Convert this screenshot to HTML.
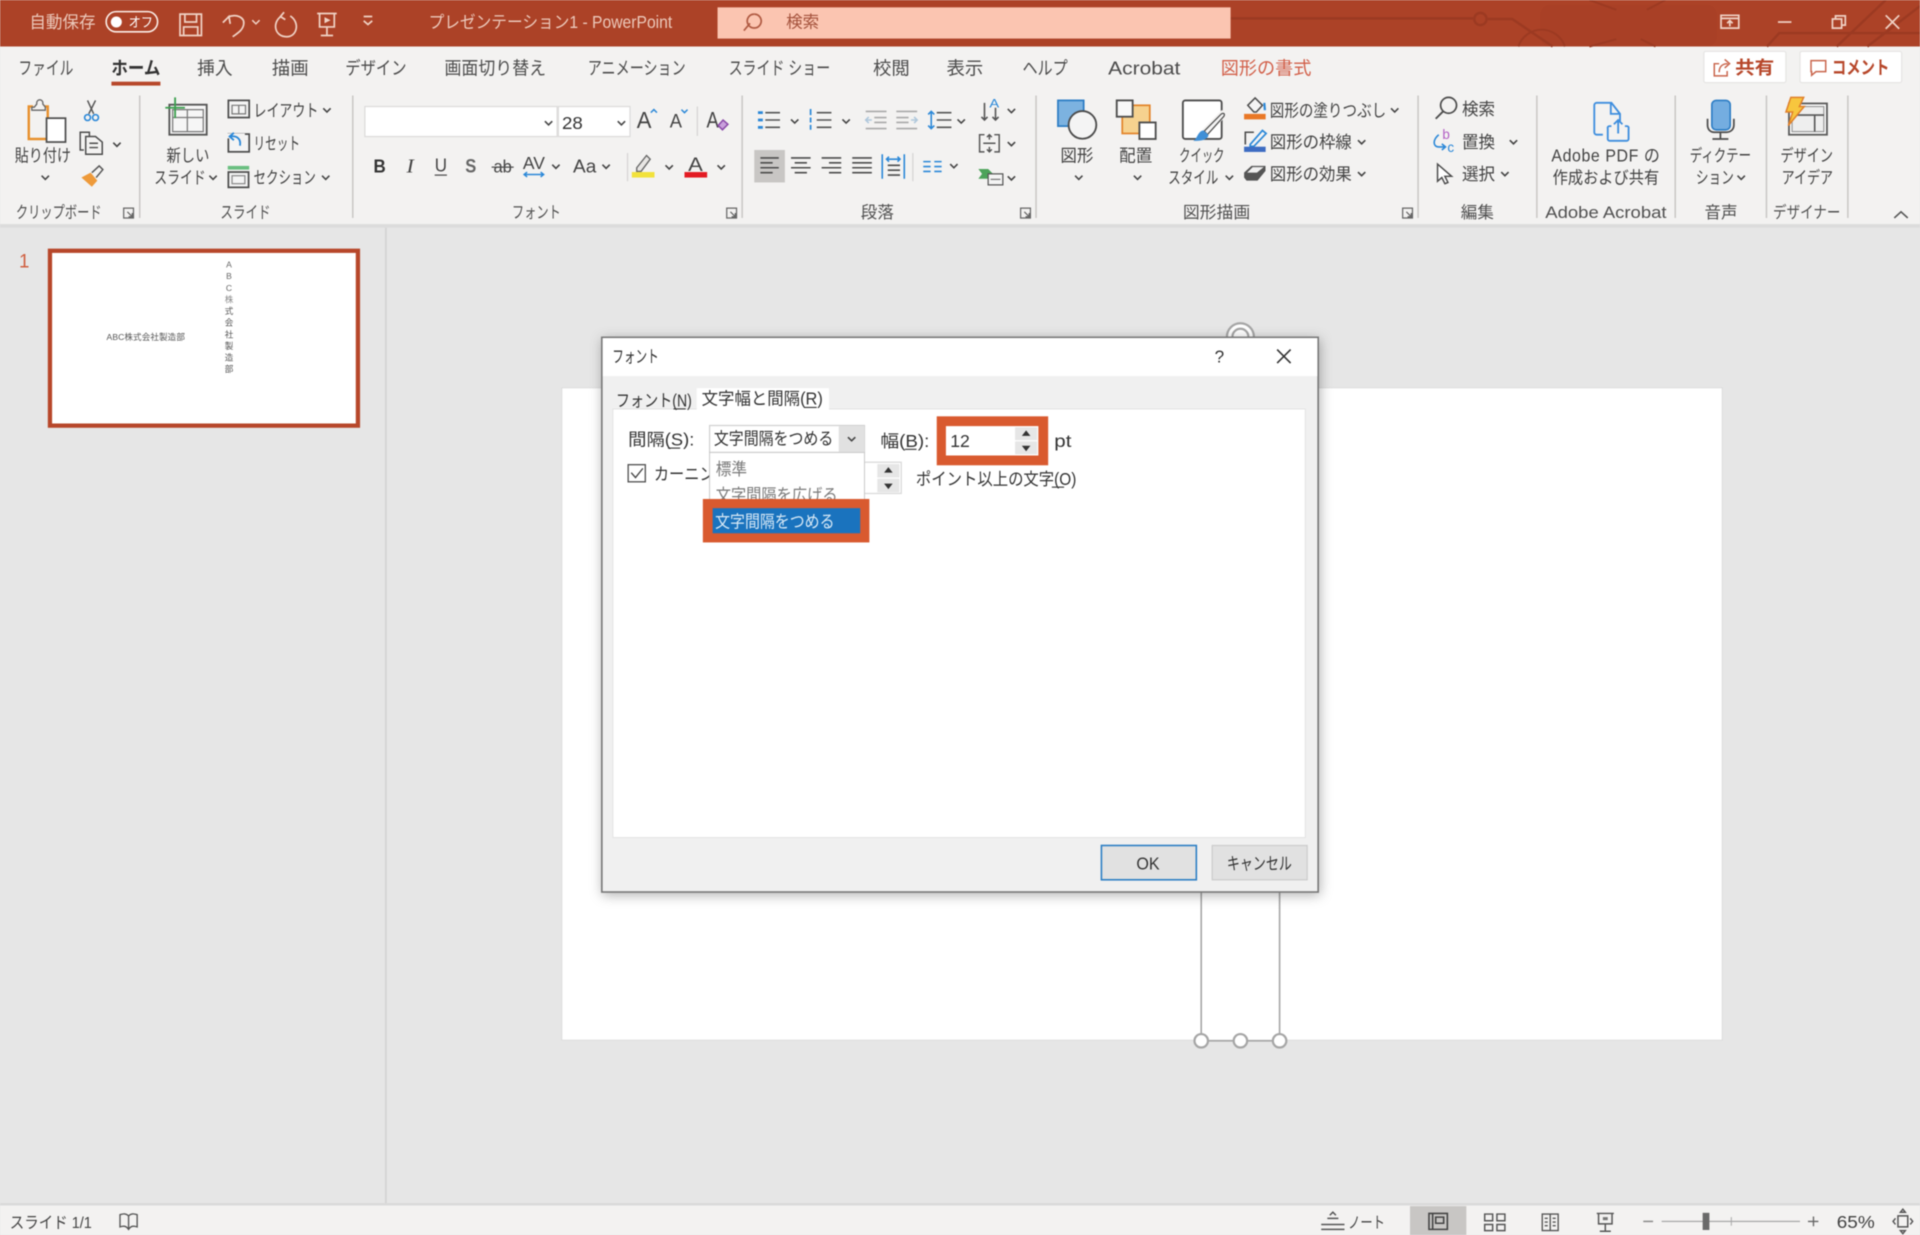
<!DOCTYPE html>
<html lang="ja"><head><meta charset="utf-8"><title>PowerPoint</title>
<style>
html,body{margin:0;padding:0;width:1920px;height:1235px;overflow:hidden;background:#e6e6e6}
svg{display:block;width:1920px;height:1235px;filter:blur(.55px)}
text{font-family:"Liberation Sans","Noto Sans CJK JP",sans-serif;fill:#434343;font-size:14px}
.tb{fill:#ecc9bb;font-size:14px}
.tab{font-size:15px;fill:#4c4c4c}
.g{font-size:13.5px;fill:#505050}
.d{fill:#333;font-size:14px}
.w{fill:none;stroke:#f0d2c5;stroke-width:1.4}
</style></head><body>
<svg viewBox="0 0 1568 1008.6" preserveAspectRatio="none" xmlns="http://www.w3.org/2000/svg">
<defs>
<path id="c" d="M-3-1.5L0 1.5L3-1.5" fill="none" stroke="#444" stroke-width="1.3"/>
<path id="lau" d="M-4-4H4V4H-4ZM-1-1L3 3M3 0V3H0" fill="none" stroke="#666" stroke-width="1"/>
<filter id="sh" x="-5%" y="-5%" width="110%" height="110%"><feDropShadow dx="1" dy="2" stdDeviation="5" flood-color="#000" flood-opacity=".3"/></filter>
</defs>

<!-- background -->
<rect width="1568" height="1009" fill="#e6e6e6"/>
<rect x="0" y="0" width="1568" height="38" fill="#ac4227"/>
<rect x="1258" y="4" width="144" height="34" rx="8" fill="#a94026"/>
<rect x="0" y="38" width="1568" height="146" fill="#f3f2f1"/>
<rect x="0" y="183" width="1568" height="3" fill="#dcdcdc"/>
<rect x="314.500" y="186" width="1.300" height="798" fill="#d2d2d2"/>
<rect x="0" y="984" width="1568" height="25" fill="#f3f2f1"/>
<rect x="0" y="982.500" width="1568" height="2" fill="#dadada"/>

<!-- title bar circuit pattern -->
<g fill="none" stroke="#9c3a22" stroke-width="2">
<path d="M1005 15H1203M1215 15.500H1235L1268 38"/><circle cx="1209" cy="15.500" r="5"/>
<path d="M1443 38L1453 27H1568M1500 38L1540 0M1525 38L1568 5"/>
<path d="M1240 38A20 20 0 0 1 1278 38M1298 0L1320 8M1345 8L1360 0M1298 38L1320 32M1340 32L1352 38" stroke-width="1.600"/>
</g>

<text class="tb" x="24" y="23" textLength="54" lengthAdjust="spacingAndGlyphs">自動保存</text>
<rect x="86.700" y="9.500" width="42" height="16.500" rx="8.250" fill="none" stroke="#fbeee8" stroke-width="1.300"/>
<circle cx="95" cy="18" r="4.500" fill="#fff"/>
<text x="105" y="22" textLength="20" lengthAdjust="spacingAndGlyphs" style="font-size:11px;fill:#fff">オフ</text>
<path class="w" d="M147 11.500H164.500V29H147ZM151 11.500V18H160.500V11.500M150 29V22H161.500V29"/>
<path class="w" d="M182 18.500L187 13.500L188 19.500M186 14C193 11 200 14 199 20C198 25 194 27 190 30" stroke-width="1.500"/>
<path d="M206 16.500L209 19.500L212 16.500" fill="none" stroke="#f0d2c5" stroke-width="1.200"/>
<path class="w" d="M230 13C222 18 224 30 234 30C243 30 245 18 237 13M232 10L229 13.500L233 16"/>
<path class="w" d="M259 11H275M261 11V22H273V11M267 22V29M262 29H272"/><path d="M265 14L270 16.500L265 19Z" fill="#f0d2c5"/>
<path class="w" d="M297 13.500H304M297 17L300.500 20L304 17"/>
<text class="tb" x="350" y="23" textLength="199" lengthAdjust="spacingAndGlyphs">プレゼンテーション1 - PowerPoint</text>

<rect x="586" y="6" width="419" height="25.500" fill="#fbc5b1"/>
<path d="M616 11.500a5.700 5.700 0 1 1-.1 0M612.500 19L607.500 25" fill="none" stroke="#b05a42" stroke-width="1.400"/>
<text x="642" y="22.500" textLength="27" lengthAdjust="spacingAndGlyphs" style="fill:#a4523c;font-size:13.500px">検索</text>

<!-- window controls -->
<path class="w" d="M1405.500 12.500H1420V23H1405.500ZM1405.500 15H1420M1412.700 21.500V17M1410.500 19L1412.700 16.800L1415 19"/>
<path class="w" d="M1452 18H1463"/>
<path class="w" d="M1496.500 15.500H1504V23H1496.500ZM1499 15.500V13H1507V20.500H1504"/>
<path class="w" d="M1540 12.500L1551 23.500M1551 12.500L1540 23.500" stroke-width="1.500"/>

<!-- tabs -->
<text class="tab" x="15" y="61" textLength="45" lengthAdjust="spacingAndGlyphs">ファイル</text>
<text class="tab" x="91" y="61" textLength="40" lengthAdjust="spacingAndGlyphs" style="font-weight:700;fill:#333">ホーム</text>
<rect x="91" y="66.700" width="40" height="3.200" fill="#b7472a"/>
<text class="tab" x="161" y="61" textLength="29" lengthAdjust="spacingAndGlyphs">挿入</text>
<text class="tab" x="222" y="61" textLength="30" lengthAdjust="spacingAndGlyphs">描画</text>
<text class="tab" x="282" y="61" textLength="50" lengthAdjust="spacingAndGlyphs">デザイン</text>
<text class="tab" x="363" y="61" textLength="83" lengthAdjust="spacingAndGlyphs">画面切り替え</text>
<text class="tab" x="480" y="61" textLength="80" lengthAdjust="spacingAndGlyphs">アニメーション</text>
<text class="tab" x="595" y="61" textLength="83" lengthAdjust="spacingAndGlyphs">スライド ショー</text>
<text class="tab" x="713" y="61" textLength="30" lengthAdjust="spacingAndGlyphs">校閲</text>
<text class="tab" x="773" y="61" textLength="30" lengthAdjust="spacingAndGlyphs">表示</text>
<text class="tab" x="835" y="61" textLength="37" lengthAdjust="spacingAndGlyphs">ヘルプ</text>
<text class="tab" x="905" y="61" textLength="59" lengthAdjust="spacingAndGlyphs">Acrobat</text>
<text class="tab" x="997" y="61" textLength="74" lengthAdjust="spacingAndGlyphs" style="fill:#d2604a">図形の書式</text>

<!-- share/comment -->
<rect x="1391.500" y="42" width="67" height="25.500" rx="1.500" fill="#fff" stroke="#e6e5e4"/>
<path d="M1404 52H1400V62H1410.500V58M1404 59C1404 54 1407 52 1411 52M1408.500 48.500L1412.500 52L1408.500 55.500" fill="none" stroke="#c9654c" stroke-width="1.200"/>
<text x="1417" y="60.500" textLength="32" lengthAdjust="spacingAndGlyphs" style="font-weight:700;fill:#b7472a;font-size:15px">共有</text>
<rect x="1470" y="42" width="83" height="25.500" rx="1.500" fill="#fff" stroke="#e6e5e4"/>
<path d="M1479 49.500H1491V58.500H1483L1479.500 61.500V58.500H1479Z" fill="none" stroke="#c9654c" stroke-width="1.200"/>
<text x="1496" y="60.500" textLength="47" lengthAdjust="spacingAndGlyphs" style="font-weight:700;fill:#b7472a;font-size:15px">コメント</text>

<!-- separators -->
<g fill="#c8c6c4">
<rect x="113.500" y="78" width="1.200" height="100"/><rect x="287.500" y="78" width="1.200" height="100"/>
<rect x="605.500" y="78" width="1.200" height="100"/><rect x="845.500" y="78" width="1.200" height="100"/>
<rect x="1157.500" y="78" width="1.200" height="100"/><rect x="1254.500" y="78" width="1.200" height="100"/>
<rect x="1367.500" y="78" width="1.200" height="100"/><rect x="1442" y="78" width="1.200" height="100"/>
<rect x="1508.500" y="78" width="1.200" height="100"/>
</g>

<!-- group labels -->
<text class="g" x="13" y="178" textLength="70" lengthAdjust="spacingAndGlyphs">クリップボード</text>
<text class="g" x="180" y="178" textLength="41" lengthAdjust="spacingAndGlyphs">スライド</text>
<text class="g" x="418" y="178" textLength="40" lengthAdjust="spacingAndGlyphs">フォント</text>
<text class="g" x="703" y="178" textLength="27" lengthAdjust="spacingAndGlyphs">段落</text>
<text class="g" x="966" y="178" textLength="55" lengthAdjust="spacingAndGlyphs">図形描画</text>
<text class="g" x="1193" y="178" textLength="27" lengthAdjust="spacingAndGlyphs">編集</text>
<text class="g" x="1262" y="178" textLength="99" lengthAdjust="spacingAndGlyphs">Adobe Acrobat</text>
<text class="g" x="1392" y="178" textLength="27" lengthAdjust="spacingAndGlyphs">音声</text>
<text class="g" x="1448" y="178" textLength="55" lengthAdjust="spacingAndGlyphs">デザイナー</text>
<use href="#lau" x="105" y="174"/><use href="#lau" x="597.500" y="174"/><use href="#lau" x="837.500" y="174"/><use href="#lau" x="1149.500" y="174"/>
<path d="M1547 178L1552.500 173L1558 178" fill="none" stroke="#555" stroke-width="1.300"/>

<!-- clipboard -->
<path d="M27 87H23.500V113.500H38M35 87H39V96" fill="none" stroke="#e8912e" stroke-width="2"/>
<path d="M26 90V87.500H28L30 85V84A2.500 2.500 0 0 1 35 84V85L37 87.500V90Z" fill="#f3f2f1" stroke="#666" stroke-width="1.100"/>
<rect x="38" y="96.500" width="15.500" height="19.500" fill="#fff" stroke="#4c4c4c" stroke-width="1.400"/>
<text x="12" y="132" textLength="46" lengthAdjust="spacingAndGlyphs">貼り付け</text>
<use href="#c" x="37" y="145"/>
<path d="M71.500 82L76.500 93M78 82L72.500 93" fill="none" stroke="#555" stroke-width="1.200"/>
<circle cx="71.500" cy="96" r="2.400" fill="none" stroke="#2b88d8" stroke-width="1.300"/><circle cx="78" cy="96" r="2.400" fill="none" stroke="#2b88d8" stroke-width="1.300"/>
<path d="M68.500 122.500H65.500V108H73V111M70 111.500H78L83.500 116V126H70ZM73 117H80M73 120.500H80" fill="none" stroke="#4c4c4c" stroke-width="1.200"/>
<use href="#c" x="95.500" y="118"/>
<path d="M66.500 145L74 141L79.500 147.500L75 152.500Z" fill="#ee9a3a"/><path d="M75 141L81 135.500L84 138.500L78.500 145" fill="#f3f2f1" stroke="#555" stroke-width="1.200"/>

<!-- slides group -->
<rect x="138.300" y="85.500" width="30.500" height="24.500" fill="#f6f6f6" stroke="#555" stroke-width="1.500"/>
<path d="M141 89.500H166V107.500H141ZM153 89.500V107.500M141 96H166" fill="none" stroke="#777" stroke-width="1"/>
<path d="M143 79.500V96.500M135 88H151" stroke="#3ca04f" stroke-width="1.500" fill="none"/>
<text x="136" y="132" textLength="35" lengthAdjust="spacingAndGlyphs">新しい</text>
<text x="126" y="150" textLength="42" lengthAdjust="spacingAndGlyphs">スライド</text><use href="#c" x="174" y="145"/>
<rect x="186.500" y="82" width="17" height="14" fill="#f4f4f4" stroke="#4c4c4c" stroke-width="1.400"/>
<path d="M189.500 86H200.500V93H189.500ZM195 86V93" fill="none" stroke="#777"/>
<text x="207" y="95" textLength="53" lengthAdjust="spacingAndGlyphs">レイアウト</text><use href="#c" x="267" y="90"/>
<rect x="186.500" y="109.500" width="17" height="14.500" fill="#f4f4f4" stroke="#4c4c4c" stroke-width="1.400"/>
<path d="M185 111H198V117" fill="none" stroke="#f3f2f1" stroke-width="4"/><path d="M196 119C197 113 193 110.500 188 111.500M191 108.500L187.500 111.500L191 114.500" fill="none" stroke="#2b88d8" stroke-width="1.500"/>
<text x="207" y="122" textLength="38" lengthAdjust="spacingAndGlyphs">リセット</text>
<rect x="186" y="135.500" width="17.500" height="3" fill="#6abf80"/>
<rect x="186.500" y="140.500" width="16.500" height="12.500" fill="#f4f4f4" stroke="#4c4c4c" stroke-width="1.400"/>
<rect x="189.500" y="143.500" width="10.500" height="6.500" fill="none" stroke="#888"/>
<text x="207" y="150" textLength="51" lengthAdjust="spacingAndGlyphs">セクション</text><use href="#c" x="266" y="145"/>

<!-- font group -->
<rect x="298" y="87" width="157" height="24.500" fill="#fff" stroke="#dcdbda"/>
<rect x="456" y="87" width="58.500" height="24.500" fill="#fff" stroke="#dcdbda"/>
<use href="#c" x="448" y="100.500"/><use href="#c" x="507.500" y="100.500"/>
<text x="459" y="105.500" textLength="17" lengthAdjust="spacingAndGlyphs" style="font-size:14px;fill:#333">28</text>
<text x="520" y="104.500" style="font-size:19px" textLength="12" lengthAdjust="spacingAndGlyphs">A</text>
<path d="M531.500 92L534 89.500L536.500 92" fill="none" stroke="#2b88d8" stroke-width="1.200"/>
<text x="547" y="104" style="font-size:16px" textLength="10" lengthAdjust="spacingAndGlyphs">A</text>
<path d="M556.500 89.500L559 92L561.500 89.500" fill="none" stroke="#2b88d8" stroke-width="1.200"/>
<rect x="569" y="87" width="1" height="24" fill="#d5d4d3"/>
<text x="577" y="104" style="font-size:18px" textLength="10" lengthAdjust="spacingAndGlyphs">A</text>
<path d="M586.500 102.500L590.500 98L594.500 101.500L590 106Z" fill="#c9a0dc" stroke="#8a48a8" stroke-width="1.200"/>

<text x="305" y="141" textLength="10" lengthAdjust="spacingAndGlyphs" style="font-weight:700;fill:#333;font-size:15px">B</text>
<text x="332" y="141" textLength="6" lengthAdjust="spacingAndGlyphs" style="font-family:'Liberation Serif',serif;font-style:italic;font-size:16px">I</text>
<text x="355" y="140" textLength="10" lengthAdjust="spacingAndGlyphs" style="font-size:15px">U</text><rect x="355" y="142.500" width="10" height="1" fill="#4a4a4a"/>
<text x="380" y="141" textLength="9" lengthAdjust="spacingAndGlyphs" style="font-size:16px;fill:#666;font-weight:700">S</text>
<text x="403" y="141" textLength="15" lengthAdjust="spacingAndGlyphs" style="font-size:14px">ab</text><rect x="401.500" y="136" width="18" height="1" fill="#4a4a4a"/>
<text x="427" y="138" textLength="18" lengthAdjust="spacingAndGlyphs" style="font-size:14px">AV</text>
<path d="M428 142.500H444M430.500 140.500L428 142.500L430.500 144.500M441.500 140.500L444 142.500L441.500 144.500" fill="none" stroke="#2b88d8" stroke-width="1.200"/>
<use href="#c" x="454" y="136"/>
<text x="468" y="141" textLength="19" lengthAdjust="spacingAndGlyphs" style="font-size:15px">Aa</text>
<use href="#c" x="495" y="136"/>
<rect x="512" y="125" width="1" height="23" fill="#d5d4d3"/>
<path d="M520 137L528 127L531 130L523.500 140H520Z" fill="#e8e6e4" stroke="#666" stroke-width="1.100"/>
<rect x="516" y="140.500" width="18.500" height="4.500" fill="#f2e23b"/>
<use href="#c" x="546.500" y="136.500"/>
<text x="562" y="139.500" textLength="12" lengthAdjust="spacingAndGlyphs" style="font-size:16px">A</text>
<rect x="559" y="140.500" width="18.500" height="4.500" fill="#e31b23"/>
<use href="#c" x="589" y="136.500"/>

<!-- paragraph -->
<g stroke-width="1.300" fill="none">
<path d="M625 92H637M625 98H637M625 104H637" stroke="#555"/><path d="M619 92H623M619 98H623M619 104H623" stroke="#2b88d8" stroke-width="2.200"/>
<path d="M667 92H679M667 98H679M667 104H679" stroke="#555"/><path d="M662 89V94M662 96V100M662 102V106" stroke="#2b88d8" stroke-width="1.400"/>
<path d="M707 91H724M714 96H724M714 100H724M707 105H724" stroke="#a9a9a9"/><path d="M712 98H707M709.500 95.500L707 98L709.500 100.500" stroke="#b0c8dc"/>
<path d="M732 91H749M732 96H742M732 100H742M732 105H749" stroke="#a9a9a9"/><path d="M744 98H749M746.500 95.500L749 98L746.500 100.500" stroke="#b0c8dc"/>
<path d="M765 92H777M765 98H777M765 104H777" stroke="#555"/><path d="M760.500 91V105M758 93.500L760.500 91L763 93.500M758 102.500L760.500 105L763 102.500" stroke="#2b88d8"/>
<path d="M804 84V98M801.500 95.500L804 98L806.500 95.500M813 88V98M810.500 95.500L813 98L815.500 95.500" stroke="#555"/>
</g>
<text x="808" y="88" textLength="8" lengthAdjust="spacingAndGlyphs" style="font-size:10px;fill:#2b88d8">A</text>
<use href="#c" x="649" y="99"/><use href="#c" x="691" y="99"/><use href="#c" x="785" y="99"/><use href="#c" x="826" y="90.500"/>
<rect x="616" y="122.500" width="25" height="26.500" fill="#c8c6c4"/>
<g fill="none" stroke="#4c4c4c" stroke-width="1.300">
<path d="M621 129H636M621 133H631M621 137H636M621 141H631"/>
<path d="M646 129H662M649 133H659M646 137H662M649 141H659"/>
<path d="M671 129H687M677 133H687M671 137H687M677 141H687"/>
<path d="M696 129H712M696 133H712M696 137H712M696 141H712"/>
<path d="M725 135H735M725 139H735M725 143H735" />
</g>
<path d="M720.500 126V146M738.500 126V146M724 130H735M726 128L724 130L726 132M733 128L735 130L733 132" fill="none" stroke="#2b88d8" stroke-width="1.300"/>
<rect x="745" y="125" width="1" height="23" fill="#d5d4d3"/>
<path d="M754 132H760M763 132H769M754 136H760M763 136H769M754 140H760M763 140H769" stroke="#2b88d8" stroke-width="1.300"/>
<use href="#c" x="779" y="135.500"/>
<path d="M804 110H800V124H804M812 110H816V124H812M803 117H813M808 110V114M808 120V124M806 112L808 110L810 112M806 122L808 124L810 122" fill="none" stroke="#555" stroke-width="1.200"/>
<use href="#c" x="826" y="117.500"/>
<path d="M799 138H807L811 142L807 146H799L802 142Z" fill="#4da35a"/>
<rect x="807" y="142" width="12" height="9" fill="#f4f4f4" stroke="#555"/>
<path d="M809 146.500H817" stroke="#777"/>
<use href="#c" x="826" y="145.500"/>

<!-- drawing -->
<rect x="864" y="82" width="21" height="21" fill="#7cb2e0" stroke="#2b7cc4" stroke-width="1.400"/>
<circle cx="884" cy="102" r="11.300" fill="#f4f4f4" stroke="#4c4c4c" stroke-width="1.500"/>
<text x="866" y="132" textLength="27" lengthAdjust="spacingAndGlyphs">図形</text><use href="#c" x="881" y="145"/>
<rect x="916.500" y="86" width="22.500" height="23" fill="#f6d28f" stroke="#e3842a" stroke-width="1.400"/>
<rect x="912" y="82" width="13" height="13.300" fill="#f8f8f8" stroke="#4c4c4c" stroke-width="1.500"/>
<rect x="930.500" y="100" width="13.300" height="13.500" fill="#fff" stroke="#4c4c4c" stroke-width="1.500"/>
<text x="914" y="132" textLength="27" lengthAdjust="spacingAndGlyphs">配置</text><use href="#c" x="929" y="145"/>
<rect x="966" y="82" width="31.700" height="31.500" rx="2" fill="#fff" stroke="#4c4c4c" stroke-width="1.500"/>
<path d="M984 108L1000 92" stroke="#f3f2f1" stroke-width="6"/>
<path d="M983.500 107L997.500 93C999.500 92 1000.500 93 999.500 95L986 110Z" fill="#f4f4f4" stroke="#4c4c4c" stroke-width="1"/>
<path d="M974.500 115C978 113.500 978 107 983 106.500L987 110.500C986 114 981 115.500 974.500 115Z" fill="#3f8fd6"/>
<text x="963" y="132" textLength="37" lengthAdjust="spacingAndGlyphs">クイック</text>
<text x="954" y="150" textLength="41" lengthAdjust="spacingAndGlyphs">スタイル</text><use href="#c" x="1004" y="145"/>

<path d="M1019 86L1025 80L1031 86L1026 91.500H1024Z" fill="#f4f4f4" stroke="#4c4c4c" stroke-width="1.200"/>
<path d="M1032.500 84L1033 90" stroke="#2b88d8" stroke-width="1.800"/>
<rect x="1016" y="93" width="17.600" height="4.500" fill="#e97826"/>
<text x="1037" y="95" textLength="95" lengthAdjust="spacingAndGlyphs">図形の塗りつぶし</text><use href="#c" x="1139" y="90"/>
<path d="M1017 118V108H1024" fill="none" stroke="#4c4c4c" stroke-width="1.300"/>
<path d="M1021 118L1031 106.500L1034 109L1024 119.500L1021 119.500Z" fill="#f4f4f4" stroke="#2b88d8" stroke-width="1.400"/>
<rect x="1016" y="119.800" width="17.600" height="4.300" fill="#3d6cc2"/>
<text x="1037" y="121" textLength="67" lengthAdjust="spacingAndGlyphs">図形の枠線</text><use href="#c" x="1112" y="116"/>
<path d="M1016 141L1022 135.500H1033.500V139.500L1027 147.500H1018L1016 145Z" fill="#555"/>
<path d="M1018.500 141L1023 136.500H1032L1026.500 141Z" fill="#f0f0f0"/>
<text x="1037" y="147" textLength="67" lengthAdjust="spacingAndGlyphs">図形の効果</text><use href="#c" x="1112" y="142"/>

<!-- edit -->
<circle cx="1183" cy="86" r="6.500" fill="none" stroke="#4c4c4c" stroke-width="1.400"/><path d="M1178.500 91L1172.500 97" stroke="#4c4c4c" stroke-width="1.500"/>
<text x="1194" y="94" textLength="27" lengthAdjust="spacingAndGlyphs">検索</text>
<text x="1178" y="113.500" style="font-size:11px;fill:#b25ec4">b</text><text x="1182" y="124" style="font-size:11px;fill:#2b88d8">c</text>
<path d="M1175 110C1170 114 1170 120 1175 120H1180M1177.500 117.500L1180.500 120L1177.500 122.500" fill="none" stroke="#2b88d8" stroke-width="1.300"/>
<text x="1194" y="121" textLength="27" lengthAdjust="spacingAndGlyphs">置換</text><use href="#c" x="1236" y="116"/>
<path d="M1174 134V148L1177.500 145L1180 150L1182.500 149L1180 144H1185.500Z" fill="#fff" stroke="#4c4c4c" stroke-width="1.200"/>
<text x="1194" y="147" textLength="27" lengthAdjust="spacingAndGlyphs">選択</text><use href="#c" x="1229" y="142"/>

<!-- adobe -->
<path d="M1309 110H1304A2 2 0 0 1 1302 108V86A2 2 0 0 1 1304 84H1316L1323 93V99M1315.500 84V93H1323" fill="none" stroke="#3e8ede" stroke-width="1.500"/>
<path d="M1316 103H1314.500A1.500 1.500 0 0 0 1313 105V113.500A1.500 1.500 0 0 0 1314.500 115H1328.500A1.500 1.500 0 0 0 1330 113.500V105A1.500 1.500 0 0 0 1328.500 103H1327M1321.500 109V98M1318 101.500L1321.500 98L1325 101.500" fill="none" stroke="#3e8ede" stroke-width="1.500"/>
<text x="1267" y="132" textLength="89" lengthAdjust="spacingAndGlyphs" style="letter-spacing:.5px">Adobe PDF の</text>
<text x="1268" y="150" textLength="87" lengthAdjust="spacingAndGlyphs">作成および共有</text>

<!-- dictation -->
<rect x="1398" y="82" width="15" height="24" rx="3.500" fill="#74ade0" stroke="#2b7cc4" stroke-width="1.300"/>
<path d="M1394.500 97V102C1394.500 106 1397 108 1400 108H1410C1413 108 1416 106 1416 102V97M1405 108V113M1398.500 113.500H1411.500" fill="none" stroke="#4c4c4c" stroke-width="1.400"/>
<text x="1380" y="132" textLength="50" lengthAdjust="spacingAndGlyphs">ディクテー</text>
<text x="1385" y="150" textLength="31" lengthAdjust="spacingAndGlyphs">ション</text><use href="#c" x="1422" y="145"/>

<!-- designer -->
<rect x="1461" y="84.500" width="31" height="25.500" fill="#fff" stroke="#5c5c5c" stroke-width="1.500"/>
<rect x="1463.500" y="87" width="26" height="20.500" fill="#eee" stroke="#999"/>
<path d="M1482 94H1489.500M1482 94V107.500M1466 94H1482" fill="none" stroke="#555" stroke-width="1.300"/>
<path d="M1462.500 79.500H1473L1469.500 87H1473.500L1460.500 102.500L1464 91.500H1458.500Z" fill="#f7c63e" stroke="#e0802a" stroke-width="1.200"/>
<text x="1454" y="132" textLength="43" lengthAdjust="spacingAndGlyphs">デザイン</text>
<text x="1455" y="150" textLength="42" lengthAdjust="spacingAndGlyphs">アイデア</text>

<!-- thumbnail -->
<text x="15.500" y="218.500" textLength="8.500" lengthAdjust="spacingAndGlyphs" style="font-size:16px;fill:#d05f40">1</text>
<rect x="40.800" y="204.800" width="251.500" height="142.800" fill="#fff" stroke="#b7472a" stroke-width="3.500"/>
<text x="87" y="277.500" textLength="64" lengthAdjust="spacing" style="font-size:7px;fill:#555">ABC株式会社製造部</text>
<g style="text-anchor:middle">
<text x="187" y="218.500" style="font-size:7px;fill:#666">A</text><text x="187" y="228" style="font-size:7px;fill:#666">B</text><text x="187" y="237.500" style="font-size:7px;fill:#666">C</text>
<text x="187" y="247" style="font-size:7px;fill:#888">株</text><text x="187" y="256.500" style="font-size:7px;fill:#555">式</text><text x="187" y="266" style="font-size:7px;fill:#555">会</text>
<text x="187" y="275.500" style="font-size:7px;fill:#555">社</text><text x="187" y="285" style="font-size:7px;fill:#555">製</text><text x="187" y="294.500" style="font-size:7px;fill:#555">造</text><text x="187" y="304" style="font-size:7px;fill:#555">部</text>
</g>

<!-- slide -->
<rect x="458.800" y="316.700" width="947.700" height="532.800" fill="#fff" stroke="#dcdcdc" stroke-width=".8"/>
<circle cx="1013" cy="275" r="11" fill="#fff" stroke="#a6a6a6" stroke-width="1.800"/>
<circle cx="1013" cy="275" r="6.500" fill="#fff" stroke="#a6a6a6" stroke-width="1.800"/>
<path d="M981 720V850H1045V720" fill="none" stroke="#a6a6a6" stroke-width="1.300"/>
<circle cx="981" cy="850" r="5.500" fill="#fff" stroke="#a6a6a6" stroke-width="1.800"/>
<circle cx="1013" cy="850" r="5.500" fill="#fff" stroke="#a6a6a6" stroke-width="1.800"/>
<circle cx="1045" cy="850" r="5.500" fill="#fff" stroke="#a6a6a6" stroke-width="1.800"/>

<!-- dialog -->
<rect x="491.500" y="275.500" width="585" height="453" fill="#f0f0f0" stroke="#777" stroke-width="1.300" filter="url(#sh)"/>
<rect x="492.300" y="276.200" width="583.500" height="31" fill="#fff"/>
<text class="d" x="500" y="296" textLength="38" lengthAdjust="spacingAndGlyphs">フォント</text>
<text class="d" x="992" y="296" style="font-size:14px">?</text>
<path d="M1043 285.500L1054 296.500M1054 285.500L1043 296.500" stroke="#333" stroke-width="1.300" fill="none"/>
<rect x="500.500" y="334" width="565.500" height="350" fill="#fff" stroke="#e3e3e3" stroke-width=".8"/>
<rect x="569" y="317" width="108" height="18" fill="#fff"/>
<text class="d" x="503" y="332" textLength="62" lengthAdjust="spacingAndGlyphs">フォント(N)</text><rect x="550" y="333.500" width="10" height=".9" fill="#333"/>
<text class="d" x="573" y="330.500" textLength="99" lengthAdjust="spacingAndGlyphs">文字幅と間隔(R)</text><rect x="657" y="332.300" width="10" height=".9" fill="#333"/>
<text class="d" x="513" y="364" textLength="54" lengthAdjust="spacingAndGlyphs">間隔(S):</text><rect x="545.500" y="365.500" width="10" height=".9" fill="#333"/>
<rect x="579.500" y="347.500" width="126.500" height="22" fill="#fff" stroke="#d0d0d0"/>
<rect x="685" y="348" width="21" height="21.500" fill="#e1e1e1"/>
<use href="#c" x="695.500" y="358.500"/>
<text class="d" x="583" y="363" textLength="97.500" lengthAdjust="spacingAndGlyphs">文字間隔をつめる</text>
<text class="d" x="719" y="365" textLength="40" lengthAdjust="spacingAndGlyphs">幅(B):</text><rect x="739" y="366.500" width="9.500" height=".9" fill="#333"/>
<rect x="765" y="340" width="91" height="40" fill="#d95a2f"/>
<rect x="772.500" y="348" width="75.500" height="24" fill="#fff"/>
<text class="d" x="776" y="365" textLength="16" lengthAdjust="spacingAndGlyphs">12</text>
<rect x="829" y="349" width="18" height="10.500" fill="#e6e6e6"/><rect x="829" y="360.500" width="18" height="10.500" fill="#e6e6e6"/>
<path d="M838 351.500L834.500 356H841.500ZM838 368.500L834.500 364H841.500Z" fill="#333"/>
<text class="d" x="861" y="365" textLength="14" lengthAdjust="spacingAndGlyphs">pt</text>
<rect x="513" y="379.500" width="14" height="14" fill="#fff" stroke="#555" stroke-width="1.100"/>
<path d="M515.500 386L519 390L525 382.500" fill="none" stroke="#444" stroke-width="1.100"/>
<text class="d" x="534" y="392" textLength="62" lengthAdjust="spacingAndGlyphs">カーニング</text>
<rect x="700" y="377.500" width="36" height="25.500" fill="#fff" stroke="#d8d8d8"/>
<rect x="716.500" y="379" width="18" height="11" fill="#e6e6e6"/><rect x="716.500" y="391" width="18" height="11" fill="#e6e6e6"/>
<path d="M725.500 381.500L722 386H729ZM725.500 399.500L722 395H729Z" fill="#333"/>
<text class="d" x="748" y="396" textLength="131" lengthAdjust="spacingAndGlyphs">ポイント以上の文字(O)</text><rect x="859" y="397.400" width="10" height=".9" fill="#333"/>
<rect x="579.500" y="369.500" width="126.500" height="39" fill="#fff" stroke="#c8c8c8" stroke-width=".8"/>
<text x="584.500" y="388" textLength="25.500" lengthAdjust="spacingAndGlyphs" style="fill:#7a7a7a">標準</text>
<text x="584.500" y="409" textLength="99.500" lengthAdjust="spacingAndGlyphs" style="fill:#7a7a7a">文字間隔を広げる</text>
<rect x="574" y="407.500" width="136" height="35.500" fill="#d95a2f"/>
<rect x="582" y="415" width="120.500" height="20.500" fill="#1a73be"/>
<text x="584" y="431" textLength="97.500" lengthAdjust="spacingAndGlyphs" style="fill:#d8e9f6">文字間隔をつめる</text>
<rect x="899.500" y="690.500" width="77.500" height="28" fill="#e1e1e1" stroke="#2d7fc4" stroke-width="1.300"/>
<text class="d" x="928" y="710" textLength="19" lengthAdjust="spacingAndGlyphs" style="font-size:14px">OK</text>
<rect x="990" y="690.500" width="77.500" height="28" fill="#e1e1e1" stroke="#cccccc"/>
<text class="d" x="1002" y="710" textLength="53" lengthAdjust="spacingAndGlyphs">キャンセル</text>

<!-- status bar -->
<text x="8" y="1003" textLength="67" lengthAdjust="spacingAndGlyphs" style="font-size:13px">スライド 1/1</text>
<path d="M98 992C101 991 103 991 105 993C107 991 109 991 112 992V1002C109 1001 107 1001 105 1004C103 1001 101 1001 98 1002ZM105 993V1003" fill="none" stroke="#555" stroke-width="1.100"/>
<path d="M1079 1000H1098M1079 1004H1098M1084 995H1093M1086 992.500L1088.500 990L1091 992.500" fill="none" stroke="#555" stroke-width="1.200"/>
<text x="1101" y="1003" textLength="30" lengthAdjust="spacingAndGlyphs" style="font-size:13px">ノート</text>
<rect x="1151.500" y="985" width="46" height="23.600" fill="#c8c6c4"/>
<path d="M1167 991H1182V1004H1167ZM1170 991V1004M1172.500 994H1179V999H1172.500Z" fill="none" stroke="#444" stroke-width="1.300"/>
<path d="M1212.500 991.500H1219V997H1212.500ZM1222.500 991.500H1229V997H1222.500ZM1212.500 1000H1219V1005H1212.500ZM1222.500 1000H1229V1005H1222.500Z" fill="none" stroke="#555" stroke-width="1.200"/>
<path d="M1259.500 991.500H1266V1005H1259.500ZM1266 991.500H1272.500V1005H1266ZM1261.500 995H1264M1261.500 998H1264M1261.500 1001H1264M1268 995H1270.500M1268 998H1270.500M1268 1001H1270.500" fill="none" stroke="#555" stroke-width="1.100"/>
<path d="M1304 991H1318M1305.500 991V999.500H1316.500V991M1311 999.500V1005M1306.500 1005.500H1315.500" fill="none" stroke="#555" stroke-width="1.200"/><path d="M1309 994H1313V996.500H1309Z" fill="#777"/>
<path d="M1342 997.500H1350" stroke="#888" stroke-width="1.200"/>
<rect x="1357" y="997" width="113" height="1" fill="#a6a6a6"/>
<rect x="1413.500" y="994" width=".8" height="7" fill="#a6a6a6"/>
<rect x="1390.500" y="990.500" width="5.500" height="14" fill="#6a6a6a"/>
<path d="M1476.500 997.500H1485M1481 993.500V1001.500" stroke="#666" stroke-width="1.100"/>
<text x="1500" y="1003" textLength="31" lengthAdjust="spacingAndGlyphs" style="font-size:14px">65%</text>
<path d="M1550 993H1558V1002H1550ZM1554 987.500L1552 990H1556ZM1554 1007.500L1552 1005H1556ZM1548 995L1546 997.500L1548 1000M1560 995L1562 997.500L1560 1000" fill="none" stroke="#555" stroke-width="1.200"/>
</svg>
</body></html>
